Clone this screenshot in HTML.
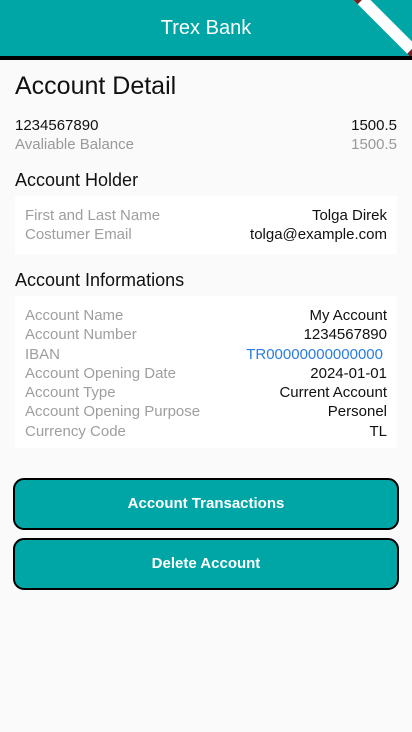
<!DOCTYPE html>
<html><head><style>
*{margin:0;padding:0;box-sizing:border-box}
body{width:412px;height:732px;background:#fafafa;font-family:"Liberation Sans",sans-serif;position:relative;overflow:hidden;color:#111}
.hdr{position:absolute;left:0;top:0;width:412px;height:56px;background:#00a5a5;overflow:hidden}
.bl{position:absolute;left:0;top:56px;width:412px;height:4px;background:#000}
.hdr h1{font-weight:normal;color:#fff;font-size:20px;text-align:center;line-height:56px}
.ban{position:absolute;left:338px;top:18px;width:96px;height:12px;background:#fff;transform:rotate(45deg);border-left:14px solid #722;border-right:12px solid #722;}
.a{position:absolute;left:15px;right:15px;display:flex;justify-content:space-between;font-size:15px;line-height:19px}
.g{color:#999}
.t{position:absolute;left:15px}
.card{position:absolute;left:15px;width:382px;background:#fff}
.r{display:flex;justify-content:space-between;padding:0 10px;font-size:15px;line-height:19.3px}
.r span:first-child{color:#9e9e9e}
.btn{position:absolute;left:13px;width:386px;height:52px;background:#00a5a5;border:2px solid #000;border-radius:11px;color:#fff;font-size:15px;font-weight:bold;text-align:center;line-height:48px}
</style></head><body>
<div class="hdr"><h1>Trex Bank</h1><div class="ban"></div></div>
<div class="bl"></div>
<div class="t" style="top:72px;font-size:25px">Account Detail</div>
<div class="a" style="top:116px"><span>1234567890</span><span>1500.5</span></div>
<div class="a g" style="top:135px"><span>Avaliable Balance</span><span>1500.5</span></div>
<div class="t" style="top:170px;font-size:18px">Account Holder</div>
<div class="card" style="top:196px;height:58px;padding-top:10px">
<div class="r"><span>First and Last Name</span><span>Tolga Direk</span></div>
<div class="r"><span>Costumer Email</span><span>tolga@example.com</span></div>
</div>
<div class="t" style="top:270px;font-size:18px">Account Informations</div>
<div class="card" style="top:296px;height:152px;padding-top:10px">
<div class="r"><span>Account Name</span><span>My Account</span></div>
<div class="r"><span>Account Number</span><span>1234567890</span></div>
<div class="r"><span>IBAN</span><span style="color:#2a7de1;padding-right:4px">TR00000000000000</span></div>
<div class="r"><span>Account Opening Date</span><span>2024-01-01</span></div>
<div class="r"><span>Account Type</span><span>Current Account</span></div>
<div class="r"><span>Account Opening Purpose</span><span>Personel</span></div>
<div class="r"><span>Currency Code</span><span>TL</span></div>
</div>
<div class="btn" style="top:478px">Account Transactions</div>
<div class="btn" style="top:538px">Delete Account</div>
</body></html>
